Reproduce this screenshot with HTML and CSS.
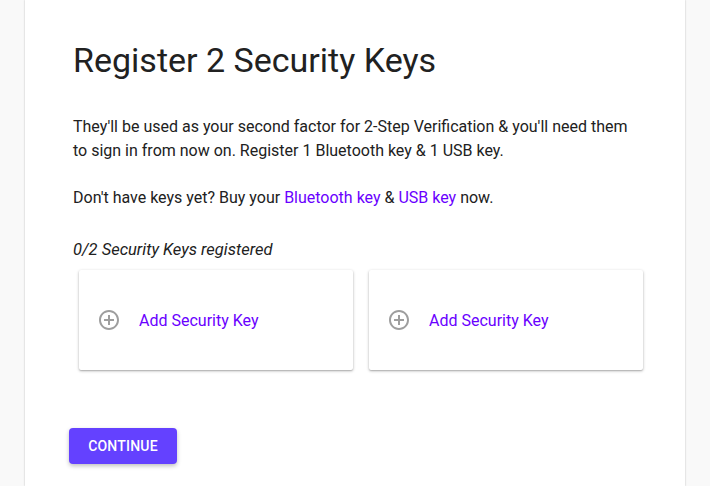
FILE: index.html
```html
<!DOCTYPE html>
<html lang="en">
<head>
<meta charset="utf-8">
<title>Register 2 Security Keys</title>
<link rel="stylesheet" href="styles.css">
</head>
<body>
<main class="panel">
  <h1 class="title">Register 2 Security Keys</h1>
  <p class="text">They'll be used as your second factor for 2-Step Verification &amp; you'll need them to sign in from now on. Register 1 Bluetooth key &amp; 1 USB key.</p>
  <p class="text">Don't have keys yet? Buy your <a class="link" href="#">Bluetooth key</a> &amp; <a class="link" href="#">USB key</a> now.</p>
  <p class="status">0/2 Security Keys registered</p>
  <div class="cards">
    <div class="card">
      <svg class="icon" viewBox="0 0 24 24" width="24" height="24"><path fill="#9e9e9e" d="M13 7h-2v4H7v2h4v4h2v-4h4v-2h-4V7zm-1-5C6.48 2 2 6.48 2 12s4.48 10 10 10 10-4.48 10-10S17.52 2 12 2zm0 18c-4.41 0-8-3.59-8-8s3.59-8 8-8 8 3.59 8 8-3.59 8-8 8z"/></svg>
      <span class="card-label">Add Security Key</span>
    </div>
    <div class="card">
      <svg class="icon" viewBox="0 0 24 24" width="24" height="24"><path fill="#9e9e9e" d="M13 7h-2v4H7v2h4v4h2v-4h4v-2h-4V7zm-1-5C6.48 2 2 6.48 2 12s4.48 10 10 10 10-4.48 10-10S17.52 2 12 2zm0 18c-4.41 0-8-3.59-8-8s3.59-8 8-8 8 3.59 8 8-3.59 8-8 8z"/></svg>
      <span class="card-label">Add Security Key</span>
    </div>
  </div>
  <button class="btn" type="button">Continue</button>
</main>
</body>
</html>
```
FILE: styles.css
```css
html, body {
  margin: 0;
  padding: 0;
  background: #f9f9f9;
  font-family: Roboto, "Liberation Sans", sans-serif;
  color: #212121;
}
.panel {
  margin: 0 25px;
  min-height: 486px;
  background: #fff;
  box-shadow: 0 0 2px rgba(0,0,0,0.18), 0 0 1px rgba(0,0,0,0.12);
  padding: 40px 48px 0 48px;
  box-sizing: border-box;
}
.title {
  margin: 0;
  font-size: 34px;
  font-weight: 400;
  line-height: 40px;
  color: #212121;
}
.text {
  margin: 35px 0 0 0;
  font-size: 16px;
  line-height: 24px;
}
.text + .text {
  margin-top: 23px;
}
.link {
  color: #6a00ff;
  text-decoration: none;
}
.status {
  margin: 28px 0 0 0;
  font-size: 16.5px;
  line-height: 24px;
  font-style: italic;
}
.cards {
  display: flex;
  gap: 16px;
  margin: 8px 0 0 6px;
}
.card {
  flex: none;
  width: 274px;
  height: 100px;
  background: #fff;
  box-shadow: 0 1px 3px rgba(0,0,0,0.3), 0 1px 1px rgba(0,0,0,0.1);
  border-radius: 2px;
  display: flex;
  align-items: center;
  padding-left: 18px;
  box-sizing: border-box;
  gap: 18px;
}
.icon {
  display: block;
  flex: none;
}
.card-label {
  color: #6a00ff;
  font-size: 16px;
}
.btn {
  display: block;
  margin: 58px 0 0 -4px;
  height: 36px;
  width: 108px;
  border: none;
  border-radius: 4px;
  background: #6441ff;
  color: #fff;
  font-family: Roboto, "Liberation Sans", sans-serif;
  font-size: 14px;
  font-weight: 500;
  text-transform: uppercase;
  letter-spacing: 0.2px;
  box-shadow: 0 2px 4px rgba(0,0,0,0.25);
  padding: 0;
}
```
